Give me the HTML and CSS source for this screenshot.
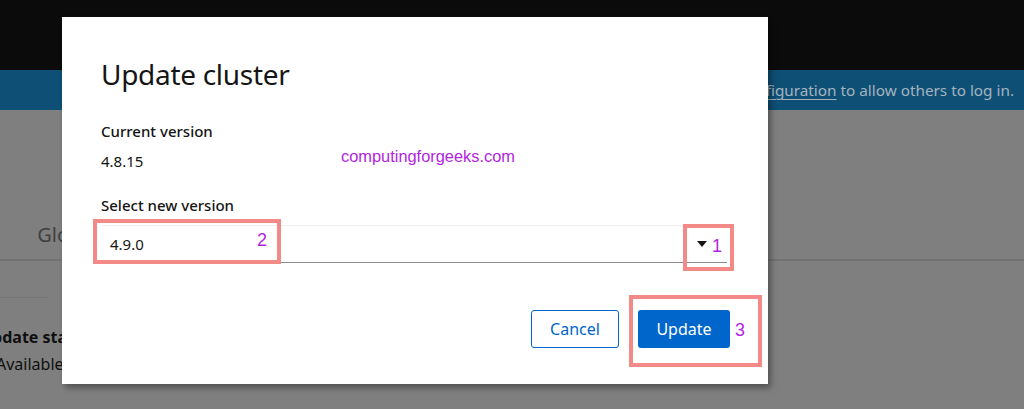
FILE: index.html
```html
<!DOCTYPE html>
<html lang="en">
<head>
    <meta charset="UTF-8">
    <meta name="viewport" content="width=device-width, initial-scale=1.0">
    <title>Update cluster</title>
    <link rel="stylesheet" href="styles.css">
</head>
<body>
    <div class="masthead"></div>
    <div class="banner">
        <span>You are logged in as a temporary administrative user. Update the <u>cluster OAuth configuration</u> to allow others to log in.</span>
    </div>
    <div class="page">
        <div class="tabs">
            <span class="tab">Details</span>
            <span class="tab">Global configuration</span>
        </div>
        <div class="section">
            <div class="section-rule"></div>
            <div class="status-label">Update status</div>
            <div class="status-value">Available updates</div>
        </div>
    </div>

    <div class="modal">
        <h2 class="modal-title">Update cluster</h2>
        <div class="field">
            <div class="field-label">Current version</div>
            <div class="field-value">4.8.15</div>
            <span class="watermark">computingforgeeks.com</span>
        </div>
        <div class="field">
            <div class="field-label">Select new version</div>
            <div class="select">
                <span class="select-text">4.9.0</span>
                <span class="caret"></span>
            </div>
        </div>
        <div class="modal-footer">
            <button type="button" class="btn btn-secondary">Cancel</button>
            <button type="button" class="btn btn-primary">Update</button>
        </div>

        <!-- annotations -->
        <div class="mark mark-version"><span class="mark-num">2</span></div>
        <div class="mark mark-toggle"><span class="mark-num">1</span></div>
        <div class="mark mark-update"><span class="mark-num">3</span></div>
    </div>
</body>
</html>
```

FILE: styles.css
```css
body {
    margin: 0;
    width: 1024px;
    height: 409px;
    overflow: hidden;
    position: relative;
    background-color: #7f7f7f;
    font-family: "Noto Sans", "Open Sans", sans-serif;
    color: #0f0f0f;
}

.masthead {
    height: 70px;
    background-color: #0b0b0b;
}

.banner {
    height: 40px;
    background-color: #0e4f75;
    color: #a4b3bf;
    font-size: 15.3px;
    display: flex;
    align-items: center;
    justify-content: flex-end;
    padding-right: 10px;
    white-space: nowrap;
    overflow: hidden;
}

.banner u {
    text-underline-offset: 3px;
}

.tabs {
    height: 149px;
    border-bottom: 2px solid #727272;
    display: flex;
    align-items: flex-end;
    gap: 37px;
    margin-left: -64px;
}

.tab {
    font-size: 20px;
    color: #3f3f3f;
    padding-bottom: 11px;
}

.section {
    padding-top: 36px;
}

.section-rule {
    width: 47px;
    border-top: 1px solid #767676;
    margin-bottom: 28px;
}

.status-label {
    font-size: 16px;
    font-weight: 700;
    margin-left: -20px;
}

.status-value {
    font-size: 16px;
    margin-left: -4px;
    margin-top: 5px;
}

/* modal */
.modal {
    position: absolute;
    left: 62px;
    top: 17px;
    width: 706px;
    height: 367px;
    box-sizing: border-box;
    background-color: #ffffff;
    box-shadow: 3px 4px 6px rgba(0, 0, 0, 0.35);
    padding: 38px 38px 0 39px;
    color: #151515;
}

.modal-title {
    margin: 0 0 28px;
    font-size: 28px;
    font-weight: 400;
    letter-spacing: -0.3px;
}

.field {
    position: relative;
    margin-bottom: 24px;
}

.field-label {
    font-size: 15px;
    font-weight: 500;
    margin-bottom: 10px;
}

.field-value {
    font-size: 15px;
}

.watermark {
    position: absolute;
    left: 240px;
    top: 26px;
    font-family: "Liberation Sans", Arial, sans-serif;
    font-size: 16.4px;
    color: #b41fe2;
}

.select {
    width: 626px;
    height: 38px;
    box-sizing: border-box;
    border-top: 1px solid #f0f0f0;
    border-bottom: 1px solid #8a8d90;
    display: flex;
    align-items: center;
    justify-content: space-between;
    padding: 0 20px 0 9px;
}

.select-text {
    font-size: 15px;
}

.caret {
    width: 0;
    height: 0;
    border-left: 5px solid transparent;
    border-right: 5px solid transparent;
    border-top: 6px solid #151515;
}

.modal-footer {
    display: flex;
    justify-content: flex-end;
    gap: 19px;
    margin-top: 47px;
}

.btn {
    height: 38px;
    padding: 0 16px;
    border-radius: 3px;
    font-family: "Noto Sans", "Open Sans", sans-serif;
    font-size: 16px;
    cursor: pointer;
}

.btn-secondary {
    background-color: #ffffff;
    color: #0066cc;
    border: 1px solid #0066cc;
    width: 88px;
}

.btn-primary {
    background-color: #0066cc;
    color: #ffffff;
    border: none;
    width: 92px;
}

/* red annotation boxes */
.mark {
    position: absolute;
    box-sizing: border-box;
    border: 4px solid #f48a88;
}

.mark-num {
    position: absolute;
    font-family: "Liberation Sans", Arial, sans-serif;
    font-size: 18px;
    color: #b41fe2;
}

.mark-version {
    left: 31px;
    top: 202px;
    width: 188px;
    height: 45px;
}

.mark-version .mark-num {
    right: 10px;
    top: 7px;
}

.mark-toggle {
    left: 621px;
    top: 207px;
    width: 51px;
    height: 47px;
}

.mark-toggle .mark-num {
    left: 25px;
    top: 8px;
}

.mark-update {
    left: 567px;
    top: 278px;
    width: 133px;
    height: 72px;
}

.mark-update .mark-num {
    left: 102px;
    top: 21px;
}
```
